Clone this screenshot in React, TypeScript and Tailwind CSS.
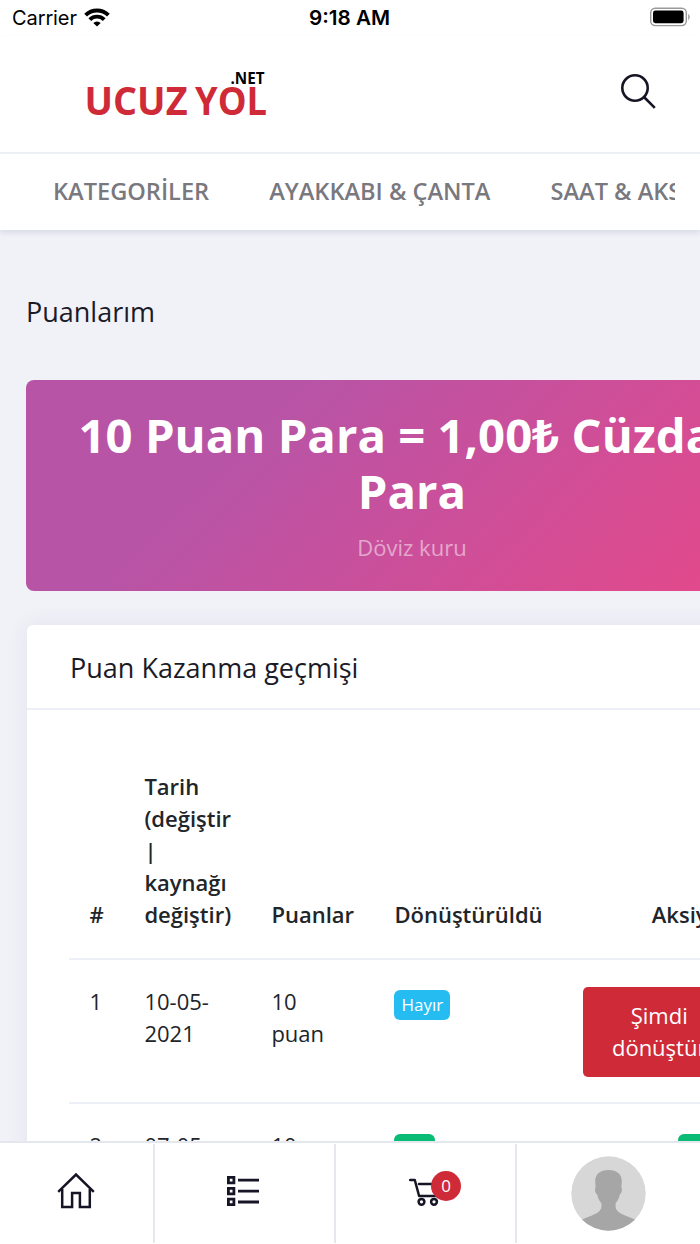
const categories = ['KATEGORİLER', 'AYAKKABI & ÇANTA', 'SAAT & AKSESUAR'];

const history = [
  { id: 1, date: ['10-05-', '2021'], points: '10 puan', converted: false },
  { id: 2, date: ['07-05-', '2021'], points: '10 puan', converted: true },
];

function StatusBar() {
  return (
    <div className="grid h-9 shrink-0 grid-cols-3 items-center bg-white pl-3 pr-[9px] font-['Inter',sans-serif] text-[20px] leading-9 text-black">
      <div className="flex items-center gap-2">
        <span className="tracking-[-0.1px]">Carrier</span>
        <svg width="26" height="19" viewBox="0 0 26 19" className="-ml-px -mt-0.5">
          <g fill="none" stroke="#000" strokeWidth="3.9">
            <path d="M1.600 7.200a16.200 16.200 0 0 1 22.800 0" />
            <path d="M5.800 11.600a10.300 10.300 0 0 1 14.400 0" />
          </g>
          <path d="M13 18.600 9.300 15.100a5.300 5.300 0 0 1 7.400 0Z" />
        </svg>
      </div>
      <span className="-ml-1 text-center text-[20.700px] font-semibold">
        9:18 AM
      </span>
      <svg
        width="42"
        height="20"
        viewBox="0 0 42 20"
        className="-mt-0.5 justify-self-end"
      >
        <rect
          x="1.7"
          y="1.2"
          width="35.6"
          height="17.4"
          rx="4.5"
          fill="none"
          stroke="#999"
          strokeWidth="1.4"
        />
        <rect x="4" y="3.6" width="30.6" height="12.6" rx="2.4" />
        <path d="M39.2 7c2 .9 2 5 0 5.900Z" fill="#999" />
      </svg>
    </div>
  );
}

function Header() {
  return (
    <header className="z-10 shrink-0 bg-white shadow-[0_3px_5px_rgba(40,45,90,0.11)]">
      <div className="flex h-[118px] items-start justify-between border-b-2 border-[#edf0f5] pl-[86px] pr-[43px] pt-8">
        <svg
          width="184"
          height="50"
          viewBox="0 0 184 50"
          className="font-['Open_Sans',sans-serif] font-bold"
        >
          <g fontSize="38.500" fill="#cf2a37">
            <text
              x="-1.500"
              y="47"
              textLength="103"
              lengthAdjust="spacingAndGlyphs"
            >
              UCUZ
            </text>
            <text
              x="109"
              y="47"
              textLength="72"
              lengthAdjust="spacingAndGlyphs"
            >
              YOL
            </text>
          </g>
          <text
            x="144.500"
            y="16"
            fontSize="16.500"
            fill="#000"
            textLength="34"
            lengthAdjust="spacingAndGlyphs"
          >
            .NET
          </text>
        </svg>
        <svg
          width="38"
          height="38"
          viewBox="0 0 38 38"
          fill="none"
          stroke="#161525"
          strokeWidth="2.6"
          className="mt-[5px]"
        >
          <circle cx="16" cy="15" r="12.700" />
          <path d="m25 24 10.800 10.800" />
        </svg>
      </div>
      <nav className="mr-[25px] flex h-[76px] items-center gap-[60px] overflow-hidden pb-px pl-[53px]">
        {categories.map(name => (
          <a
            key={name}
            className="shrink-0 whitespace-nowrap text-[23.600px] font-semibold text-[#79787f]"
          >
            {name}
          </a>
        ))}
      </nav>
    </header>
  );
}

function HistoryTable() {
  return (
    <table className="w-[687px] table-fixed text-left text-[22px] leading-8 text-[#212529]">
      <colgroup>
        <col className="w-[55px]" />
        <col className="w-[127px]" />
        <col className="w-[123px]" />
        <col className="w-[189px]" />
        <col className="w-[193px]" />
      </colgroup>
      <thead>
        <tr className="h-[218px] border-b-2 border-[#edeff7] align-bottom *:pb-[28px] *:pl-[20.400px] *:font-semibold">
          <th>#</th>
          <th>
            Tarih
            <br />
            (değiştir
            <br />
            |
            <br />
            kaynağı
            <br />
            değiştir)
          </th>
          <th>Puanlar</th>
          <th>Dönüştürüldü</th>
          <th className="pr-[21px] text-right">Aksiyon</th>
        </tr>
      </thead>
      <tbody>
        {history.map(row => (
          <tr
            key={row.id}
            className="h-[144px] border-b-2 border-[#edeff7] align-top *:pl-[20.400px] *:pt-[25px]"
          >
            <td>{row.id}</td>
            <td>
              {row.date[0]}
              <br />
              {row.date[1]}
            </td>
            <td className="pr-[30px]">{row.points}</td>
            <td>
              {row.converted ? (
                <span className="mt-[5px] block h-[30px] w-[41px] rounded-md bg-[#0abb75] text-center text-[17px] leading-[30px] text-white">
                  Evet
                </span>
              ) : (
                <span className="mt-[5px] block h-[30px] w-14 rounded-md bg-[#25bcf1] text-center text-[17px] leading-[30px] text-white">
                  Hayır
                </span>
              )}
            </td>
            <td className="pr-[21px]">
              {row.converted ? (
                <span className="ml-auto mt-[5px] block h-[30px] w-[57px] rounded-md bg-[#0abb75] text-center text-[17px] leading-[30px] text-white">
                  Bitti
                </span>
              ) : (
                <button
                  type="button"
                  className="mt-[1.500px] block h-[90px] w-full rounded-[5px] bg-[#cf2a37] pb-0.5 text-center leading-8 text-white"
                >
                  Şimdi
                  <br />
                  dönüştür
                </button>
              )}
            </td>
          </tr>
        ))}
      </tbody>
    </table>
  );
}

function BottomNav() {
  return (
    <nav className="z-10 flex h-[103px] shrink-0 border-t-2 border-[#e4e7ed] bg-white pb-px pt-px">
      <div className="flex w-[154.500px] items-center justify-center border-r-2 border-[#e4e7ed]">
        <svg
          width="38"
          height="38"
          viewBox="0 0 38 38"
          fill="none"
          stroke="#161525"
          strokeWidth="2.500"
          className="-mt-[5px]"
        >
          <path d="M1.200 19.800 19 2.500l17.800 17.300" />
          <path d="M5.200 17v18h9.900V21h7.800v14h9.900V17" />
        </svg>
      </div>
      <div className="flex w-[181px] items-center justify-center border-r-2 border-[#e4e7ed]">
        <svg
          width="34"
          height="32"
          viewBox="0 0 34 32"
          fill="none"
          stroke="#161525"
          strokeWidth="2.800"
          className="-ml-0.5 -mt-[5px]"
        >
          <path d="M2.400 2.400h5.500v5.500H2.400zM2.400 13.300h5.500v5.500H2.400zM2.400 24.200h5.500v5.500H2.400z" />
          <path d="M12 5.200h21M12 16.100h21M12 27h21" />
        </svg>
      </div>
      <div className="flex w-[181px] items-center justify-center border-r-2 border-[#e4e7ed]">
        <div className="relative -mt-1">
          <svg
            width="32"
            height="30"
            viewBox="0 0 32 30"
            fill="none"
            stroke="#161525"
            strokeWidth="2.500"
          >
            <path
              d="M1.200 3h4.600l4.300 16h18.900L31 7H10"
              strokeLinecap="round"
              strokeLinejoin="round"
            />
            <circle cx="12.500" cy="24.800" r="2.900" />
            <circle cx="25" cy="24.800" r="2.900" />
          </svg>
          <span className="absolute -top-1.5 left-[22px] flex size-[30px] items-center justify-center rounded-full bg-[#cf2a37] pb-px text-[17px] leading-none text-white">
            0
          </span>
        </div>
      </div>
      <div className="flex flex-1 items-center justify-center pb-px">
        <svg width="75" height="75" viewBox="0 0 75 75">
          <clipPath id="avatar">
            <circle cx="37.500" cy="37.500" r="37.200" />
          </clipPath>
          <g clipPath="url(#avatar)">
            <path fill="#d7d7d7" d="M0 0h75v75H0z" />
            <path
              fill="#a6a6a6"
              d="M37.500 14c8.500 0 13.300 4.300 13.300 11l-.4 6.500c1.200 1.600.4 6-1.600 6.900-.7 3.800-2.300 6.600-4.200 8.800v3.400c0 4.600 4.600 7 10 9.200 3.700 1.500 6.700 2.600 9.900 4.200V75h-54V64c3.200-1.600 6.200-2.700 9.900-4.200 5.400-2.200 10-4.600 10-9.200v-3.400c-1.900-2.200-3.500-5-4.200-8.800-2-.9-2.800-5.300-1.600-6.900l-.4-6.500C24.200 18.300 29 14 37.500 14Z"
            />
          </g>
        </svg>
      </div>
    </nav>
  );
}

function App() {
  return (
    <div className="flex h-[1244px] w-[700px] flex-col overflow-hidden bg-white font-['Open_Sans',sans-serif]">
      <StatusBar />
      <Header />
      <main className="min-h-0 flex-1 overflow-hidden bg-[#f1f2f8] pl-[26px] text-[#1b1b28]">
        <h1 className="pt-[64px] text-[27px] leading-9">Puanlarım</h1>
        <section className="mt-[50px] h-[211px] w-[772px] rounded-lg bg-linear-[135deg,#b854a6_29%,#eb4786_104%] pt-[27px] text-center">
          <p className="text-[47.300px] font-bold leading-14 text-white">
            10 Puan Para = 1,00
            <span className="font-['Noto_Sans',sans-serif] leading-none">₺</span>{' '}
            Cüzdan
            <br />
            Para
          </p>
          <p className="mt-3 text-[22px] leading-8 text-white/50">Döviz kuru</p>
        </section>
        <section className="ml-px mt-[34px] h-[900px] w-[771px] rounded-md bg-white shadow-[0_0_22px_rgba(69,65,100,0.08)]">
          <h2 className="h-[85px] border-b-2 border-[#edeff7] pl-[43px] text-[27px] leading-[86px]">
            Puan Kazanma geçmişi
          </h2>
          <div className="pl-[42px] pt-[31px]">
            <HistoryTable />
          </div>
        </section>
      </main>
      <BottomNav />
    </div>
  );
}

export default App;
